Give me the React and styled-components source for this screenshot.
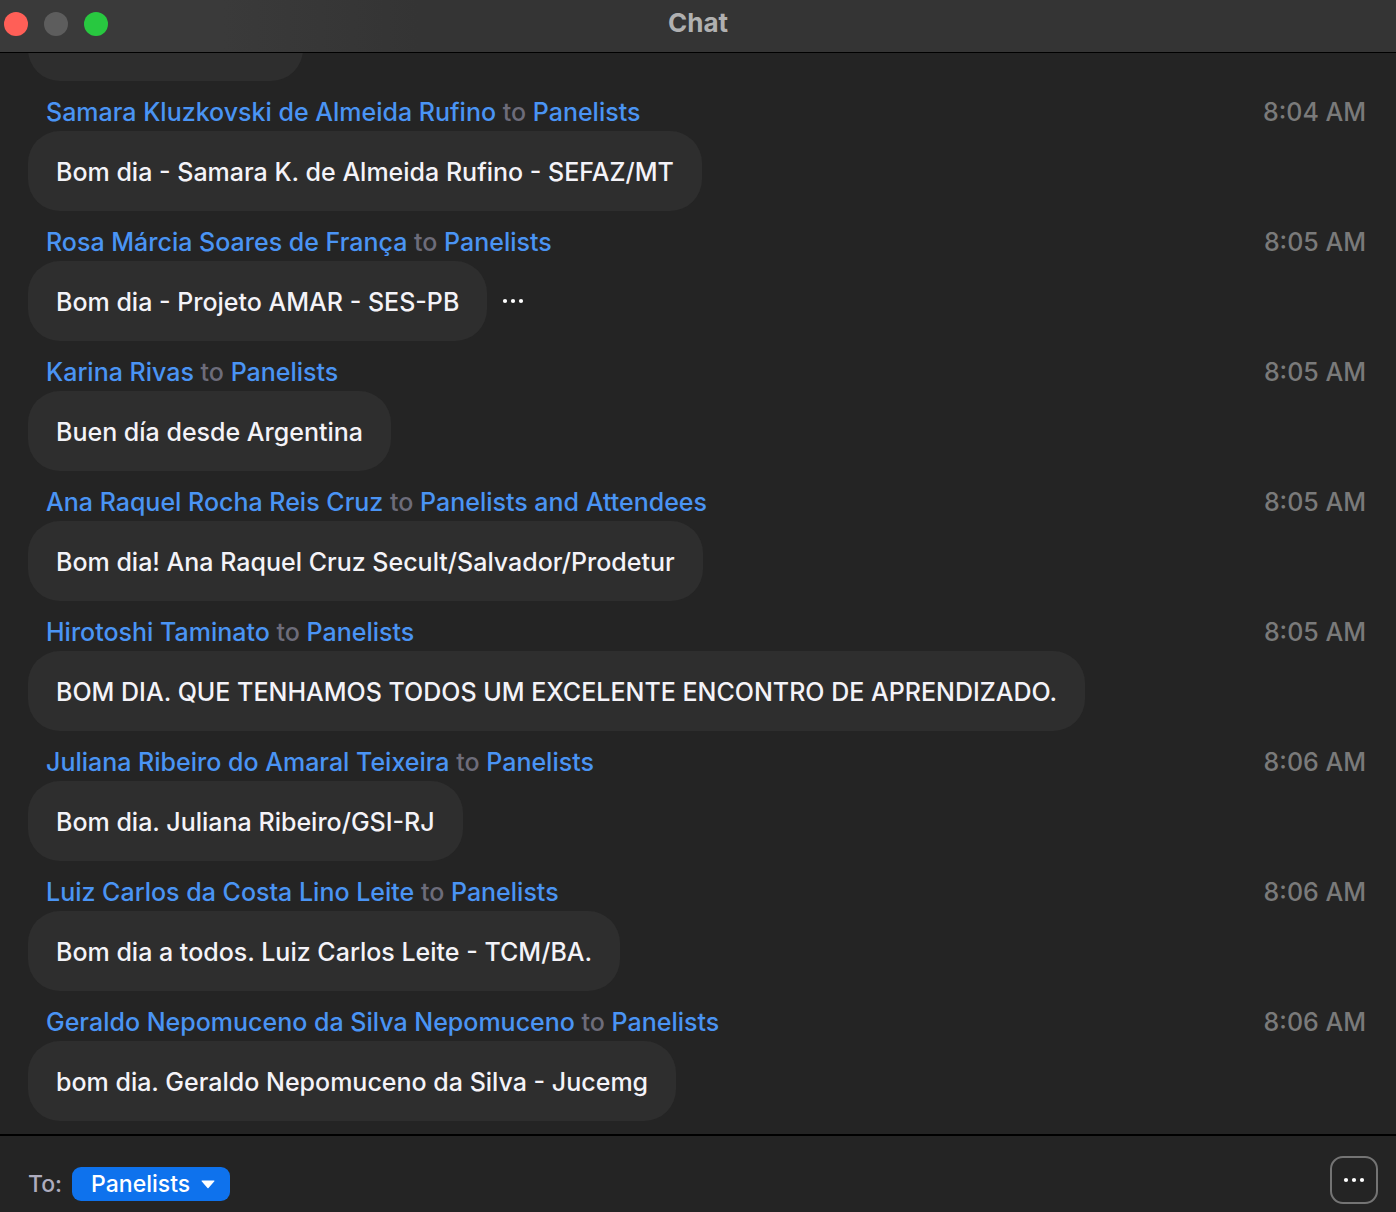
import React from "react";
import styled, { createGlobalStyle } from "styled-components";

const GlobalStyle = createGlobalStyle`
  * { box-sizing: border-box; }
  body {
    margin: 0;
    background: #242424;
    font-family: Inter, "Liberation Sans", sans-serif;
    font-variant-ligatures: no-common-ligatures;
  }
  button, select { font: inherit; cursor: pointer; }
`;

const Window = styled.div`
  display: flex;
  flex-direction: column;
  height: 100vh;
  background: #242424;
`;

const TitleBar = styled.header`
  display: grid;
  grid-template-columns: 1fr auto 1fr;
  align-items: center;
  flex: none;
  height: 53px;
  padding: 0 4px 4px;
  background: linear-gradient(90deg, #3a3a3a 0%, #3a3a3a 16%, #343434 30%);
  border-bottom: 1px solid #000;
`;

const WindowControls = styled.div`
  display: flex;
  gap: 16px;
`;

const WindowControl = styled.button`
  width: 24px;
  height: 24px;
  padding: 0;
  border: 0;
  border-radius: 50%;
  background: ${(p) => p.$color};
`;

const Title = styled.h1`
  margin: 0;
  padding-bottom: 2px;
  font-size: 26px;
  line-height: 30px;
  font-weight: 700;
  color: #b0b0b0;
`;

/* Reversed column keeps the newest message in view. */
const Scroller = styled.main`
  display: flex;
  flex-direction: column-reverse;
  flex: 1;
  min-height: 0;
  overflow-y: auto;
  scrollbar-width: none;
`;

const MessageList = styled.ol`
  margin: 0;
  padding: 0 28px 13px;
  list-style: none;
`;

const MessageHeader = styled.div`
  display: flex;
  justify-content: space-between;
  gap: 24px;
  padding: 16px 2px 4px 18px;
  font-size: 25px;
  line-height: 30px;
  font-weight: 500;
  color: #6d6c7a;
`;

const Person = styled.span`
  color: #4a94f4;
`;

const Time = styled.time`
  flex: none;
  color: #7a7a7a;
`;

const BubbleRow = styled.div`
  display: flex;
  align-items: center;
  gap: 12px;
`;

const Bubble = styled.p`
  margin: 0;
  min-width: ${(p) => p.$minWidth || 0}px;
  min-height: 80px;
  padding: 26px 28px 24px;
  border-radius: 32px;
  background: #2e2e2e;
  color: #f4f3f8;
  font-size: 25px;
  line-height: 30px;
  font-weight: 500;
`;

const MoreButton = styled.button`
  display: grid;
  place-items: center;
  width: ${(p) => (p.$outlined ? 48 : 28)}px;
  height: ${(p) => (p.$outlined ? 48 : 28)}px;
  padding: 0;
  border: ${(p) => (p.$outlined ? "2px solid #747474" : "0")};
  border-radius: 13px;
  background: transparent;
  color: #fff;
`;

const Composer = styled.footer`
  display: flex;
  justify-content: space-between;
  align-items: flex-end;
  flex: none;
  padding: 20px 18px 8px 28px;
  border-top: 2px solid #000;
`;

const Recipient = styled.div`
  display: flex;
  align-items: center;
  gap: 10px;
  padding-bottom: 3px;
  font-size: 23px;
  line-height: 34px;
  font-weight: 500;
`;

const RecipientLabel = styled.label`
  color: #aeacbe;
`;

const SelectBox = styled.div`
  display: grid;
  align-items: center;

  & > * { grid-area: 1 / 1; }
  & > svg {
    justify-self: end;
    margin-right: 15px;
    pointer-events: none;
  }
`;

const Select = styled.select`
  appearance: none;
  height: 34px;
  padding: 0 39px 0 19px;
  border: 0;
  border-radius: 9px;
  background: #0e72ed;
  color: #fff;
  line-height: 34px;
`;

const Dots = () => (
  <svg width="22" height="6" viewBox="0 0 22 6" fill="currentColor" aria-hidden="true">
    <circle cx="3" cy="3" r="2.1" />
    <circle cx="11" cy="3" r="2.1" />
    <circle cx="19" cy="3" r="2.1" />
  </svg>
);

const messages = [
  { from: "Samara Kluzkovski de Almeida Rufino", to: "Panelists", time: "8:04 AM", text: "Bom dia - Samara K. de Almeida Rufino - SEFAZ/MT" },
  { from: "Rosa Márcia Soares de França", to: "Panelists", time: "8:05 AM", text: "Bom dia - Projeto AMAR - SES-PB", active: true },
  { from: "Karina Rivas", to: "Panelists", time: "8:05 AM", text: "Buen día desde Argentina" },
  { from: "Ana Raquel Rocha Reis Cruz", to: "Panelists and Attendees", time: "8:05 AM", text: "Bom dia! Ana Raquel Cruz Secult/Salvador/Prodetur" },
  { from: "Hirotoshi Taminato", to: "Panelists", time: "8:05 AM", text: "BOM DIA. QUE TENHAMOS TODOS UM EXCELENTE ENCONTRO DE APRENDIZADO." },
  { from: "Juliana Ribeiro do Amaral Teixeira", to: "Panelists", time: "8:06 AM", text: "Bom dia. Juliana Ribeiro/GSI-RJ" },
  { from: "Luiz Carlos da Costa Lino Leite", to: "Panelists", time: "8:06 AM", text: "Bom dia a todos. Luiz Carlos Leite - TCM/BA." },
  { from: "Geraldo Nepomuceno da Silva Nepomuceno", to: "Panelists", time: "8:06 AM", text: "bom dia. Geraldo Nepomuceno da Silva - Jucemg" },
];

export default function App() {
  return (
    <Window>
      <GlobalStyle />
      <TitleBar>
        <WindowControls>
          <WindowControl $color="#ff5f57" aria-label="Close" />
          <WindowControl $color="#5d5d5d" aria-label="Minimize" />
          <WindowControl $color="#28c840" aria-label="Zoom" />
        </WindowControls>
        <Title>Chat</Title>
      </TitleBar>
      <Scroller>
        <MessageList>
          <li>
            <BubbleRow>
              <Bubble $minWidth={275} />
            </BubbleRow>
          </li>
          {messages.map((m) => (
            <li key={m.from}>
              <MessageHeader>
                <span>
                  <Person>{m.from}</Person> to <Person>{m.to}</Person>
                </span>
                <Time>{m.time}</Time>
              </MessageHeader>
              <BubbleRow>
                <Bubble>{m.text}</Bubble>
                {m.active && (
                  <MoreButton aria-label="Message options">
                    <Dots />
                  </MoreButton>
                )}
              </BubbleRow>
            </li>
          ))}
        </MessageList>
      </Scroller>
      <Composer>
        <Recipient>
          <RecipientLabel htmlFor="recipient">To:</RecipientLabel>
          <SelectBox>
            <Select id="recipient" defaultValue="Panelists">
              <option>Panelists</option>
            </Select>
            <svg width="14" height="9" viewBox="0 0 14 9" fill="#fff" aria-hidden="true">
              <path d="M1 0.5h12a.5.5 0 0 1 .4.8L7.5 8a.7.7 0 0 1-1 0L.6 1.300a.5.5 0 0 1 .4-.8z" />
            </svg>
          </SelectBox>
        </Recipient>
        <MoreButton $outlined aria-label="More chat options">
          <Dots />
        </MoreButton>
      </Composer>
    </Window>
  );
}
